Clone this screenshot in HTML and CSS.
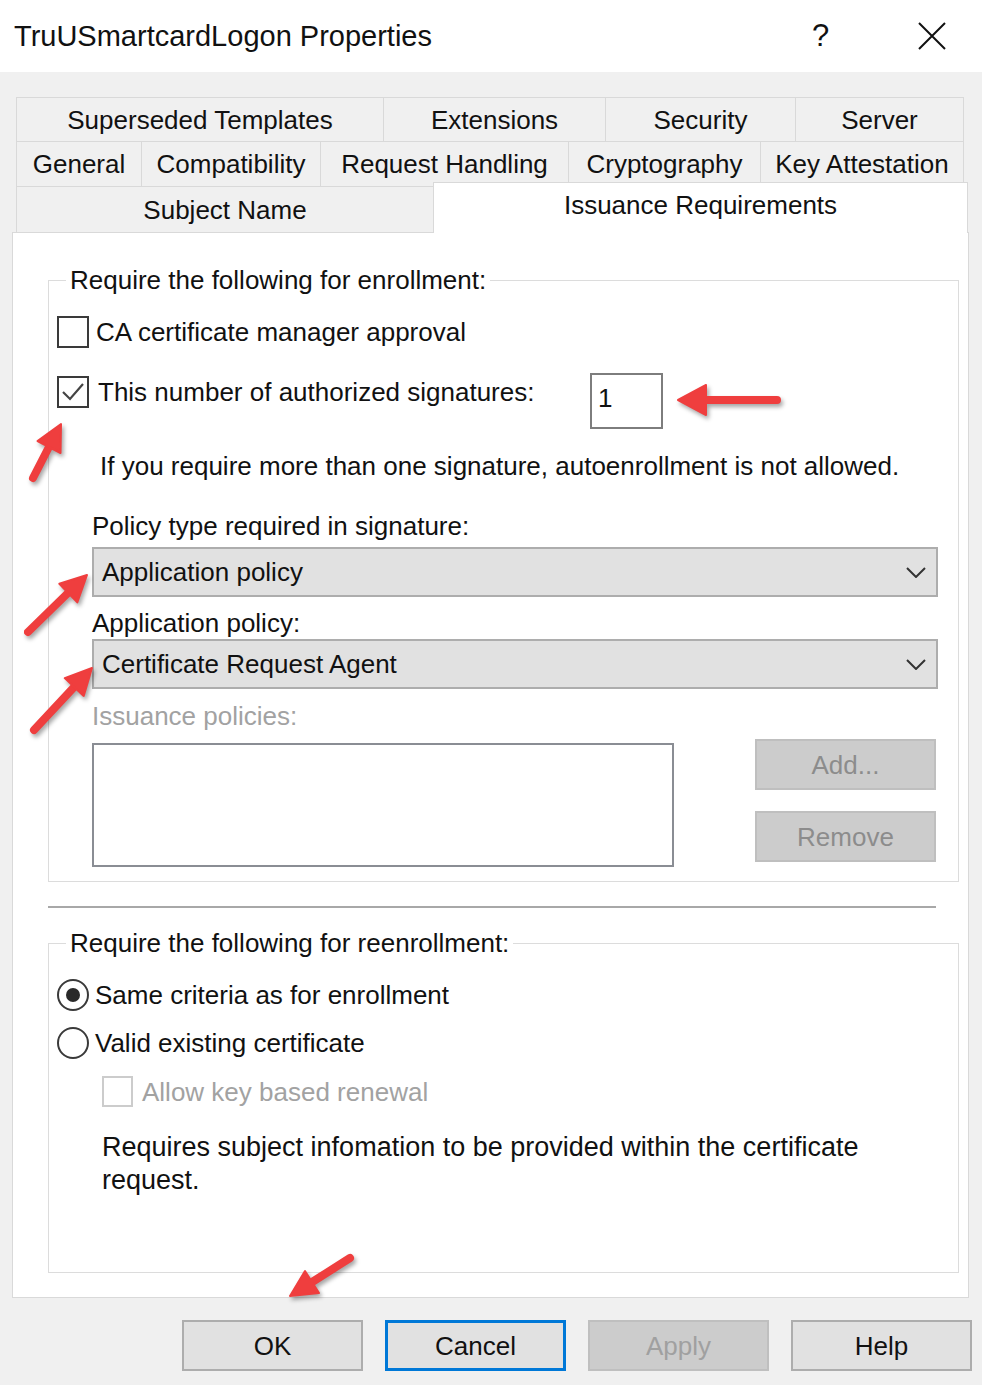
FILE: index.html
```html
<!DOCTYPE html>
<html lang="en">
<head>
<meta charset="utf-8">
<title>TruUSmartcardLogon Properties</title>
<link rel="stylesheet" href="styles.css">
</head>
<body>
<div class="titlebar">
  <div class="title">TruUSmartcardLogon Properties</div>
  <div class="help">?</div>
  <div class="close">
    <svg width="28" height="28" viewBox="0 0 28 28"><path d="M1 1 L27 27 M27 1 L1 27" stroke="#111" stroke-width="2" fill="none"/></svg>
  </div>
</div>

<div class="tabs">
  <div class="tabrow">
    <div class="tab w-sup">Superseded Templates</div>
    <div class="tab w-ext">Extensions</div>
    <div class="tab w-sec">Security</div>
    <div class="tab w-srv">Server</div>
  </div>
  <div class="tabrow r2">
    <div class="tab w-gen">General</div>
    <div class="tab w-cmp">Compatibility</div>
    <div class="tab w-req">Request Handling</div>
    <div class="tab w-cry">Cryptography</div>
    <div class="tab w-key">Key Attestation</div>
  </div>
  <div class="tabrow r3">
    <div class="tab w-sub">Subject Name</div>
    <div class="tab selected">Issuance Requirements</div>
  </div>
</div>

<div class="panel">
  <fieldset class="group g1">
    <legend>Require the following for enrollment:</legend>
    <div class="opt first">
      <span class="chk"></span>
      <span class="txt">CA certificate manager approval</span>
    </div>
    <div class="sigrow">
      <div class="opt sig">
        <span class="chk">
          <svg width="28" height="28" viewBox="0 0 28 28"><path d="M4 14 L11 21 L24 6" stroke="#444" stroke-width="2.2" fill="none"/></svg>
        </span>
        <span class="txt t9">This number of authorized signatures:</span>
      </div>
      <div class="spin">1</div>
    </div>
    <div class="note">If you require more than one signature, autoenrollment is not allowed.</div>
    <div class="lbl l1">Policy type required in signature:</div>
    <div class="combo c1">
      <span>Application policy</span>
      <svg class="chev" width="20" height="11" viewBox="0 0 20 11"><path d="M1 1 L10 10 L19 1" stroke="#333" stroke-width="2" fill="none"/></svg>
    </div>
    <div class="lbl l2">Application policy:</div>
    <div class="combo c2">
      <span>Certificate Request Agent</span>
      <svg class="chev" width="20" height="11" viewBox="0 0 20 11"><path d="M1 1 L10 10 L19 1" stroke="#333" stroke-width="2" fill="none"/></svg>
    </div>
    <div class="lbl l3 disabled">Issuance policies:</div>
    <div class="issrow">
      <div class="list"></div>
      <div class="btncol">
        <div class="btn dis">Add...</div>
        <div class="btn dis">Remove</div>
      </div>
    </div>
  </fieldset>

  <div class="sep"></div>

  <fieldset class="group g2">
    <legend>Require the following for reenrollment:</legend>
    <div class="opt first">
      <span class="radio on"></span>
      <span class="txt t6">Same criteria as for enrollment</span>
    </div>
    <div class="opt r2o">
      <span class="radio"></span>
      <span class="txt t6">Valid existing certificate</span>
    </div>
    <div class="opt sub">
      <span class="chk off"></span>
      <span class="txt t9 disabled">Allow key based renewal</span>
    </div>
    <p class="para">Requires subject infomation to be provided within the certificate<br>request.</p>
  </fieldset>
</div>

<div class="buttons">
  <div class="btn big">OK</div>
  <div class="btn big focus">Cancel</div>
  <div class="btn big dis">Apply</div>
  <div class="btn big">Help</div>
</div>

<svg class="annot" width="982" height="1385" viewBox="0 0 982 1385">
  <g class="arrow">
    <line x1="777" y1="400" x2="702" y2="400"/>
    <polygon points="678,400 706,385 706,415"/>
  </g>
  <g class="arrow">
    <line x1="33" y1="478" x2="51" y2="443"/>
    <polygon points="61,424 60.5,453 37.5,441"/>
  </g>
  <g class="arrow">
    <line x1="28" y1="632" x2="71" y2="590"/>
    <polygon points="87,575 77.3,602.4 59.3,583.8"/>
  </g>
  <g class="arrow">
    <line x1="34" y1="730" x2="76" y2="685"/>
    <polygon points="92,668 83.7,695.9 64.7,678.1"/>
  </g>
  <g class="arrow">
    <line x1="350" y1="1258" x2="309" y2="1284"/>
    <polygon points="290,1296 319,1293 305,1271"/>
  </g>
</svg>
</body>
</html>
```

FILE: styles.css
```css
* { box-sizing: border-box; }

html, body { margin: 0; padding: 0; }

body {
  width: 982px;
  height: 1385px;
  overflow: hidden;
  position: relative;
  background: #f0f0f0;
  font-family: "Liberation Sans", Arial, sans-serif;
  font-size: 26px;
  color: #111;
}

/* title bar */
.titlebar {
  height: 72px;
  background: #fff;
  display: flex;
  align-items: center;
}
.title {
  flex: 1;
  margin-left: 14px;
  font-size: 29px;
  line-height: 30px;
}
.help {
  font-size: 31px;
  line-height: 30px;
  width: 20px;
  margin-right: 86px;
  color: #111;
}
.close {
  width: 28px;
  height: 28px;
  margin-right: 36px;
  display: flex;
}

/* tabs */
.tabs {
  margin: 25px 0 0 16px;
  width: 952px;
}
.tabrow { display: flex; }
.tabrow.r2, .tabrow.r3 { margin-top: -1px; }
.tab {
  height: 45px;
  border: 1px solid #d9d9d9;
  margin-left: -1px;
  background: #f0f0f0;
  display: flex;
  align-items: center;
  justify-content: center;
  white-space: nowrap;
  line-height: 30px;
}
.tab:first-child { margin-left: 0; }
.tabrow.r2 .tab { height: 46px; }
.tabrow.r3 .tab { height: 47px; }

.w-sup { width: 368px; }
.w-ext { width: 223px; }
.w-sec { width: 191px; }
.w-srv { width: 169px; }
.w-gen { width: 126px; }
.w-cmp { width: 180px; }
.w-req { width: 249px; }
.w-cry { width: 193px; }
.w-key { width: 204px; }
.w-sub { width: 418px; }

.tabrow.r3 .tab.selected {
  width: 535px;
  height: 51px;
  margin-top: -4px;
  background: #fff;
  border-bottom: none;
  padding-bottom: 6px;
  position: relative;
  z-index: 1;
}

/* panel */
.panel {
  margin: -1px 0 0 12px;
  width: 957px;
  background: #fff;
  border: 1px solid #d9d9d9;
  padding: 0 0 24px 0;
}

.group {
  margin: 0 0 0 35px;
  width: 911px;
  border: 1px solid #dcdcdc;
  padding: 0;
  min-width: 0;
}
.group legend {
  margin-left: 17px;
  padding: 0 4px;
  line-height: 30px;
  height: 30px;
}
.g1 { margin-top: 32px; padding-bottom: 14px; }
.g2 { margin-top: 20px; padding-bottom: 75px; }

.opt {
  display: flex;
  align-items: center;
  height: 32px;
  margin-left: 8px;
}
.opt.first { margin-top: 21px; }
.txt { margin-left: 7px; line-height: 30px; white-space: nowrap; }
.txt.t9 { margin-left: 9px; }
.txt.t6 { margin-left: 6px; }

.chk {
  width: 32px;
  height: 32px;
  flex: none;
  border: 2px solid #3a3a3a;
  background: #fff;
  display: flex;
  align-items: center;
  justify-content: center;
}
.chk.off {
  width: 31px;
  height: 31px;
  border-color: #cccccc;
}

.sigrow {
  display: flex;
  align-items: flex-start;
  margin-top: 25px;
  height: 56px;
}
.opt.sig {
  width: 533px;
  flex: none;
  margin-top: 3px;
}
.spin {
  width: 73px;
  height: 56px;
  border: 2px solid #7d7d7d;
  background: #fff;
  padding: 0 0 6px 6px;
  display: flex;
  align-items: center;
}

.note {
  margin: 22px 0 0 51px;
  line-height: 30px;
  white-space: nowrap;
}
.lbl {
  margin-left: 43px;
  line-height: 30px;
  white-space: nowrap;
}
.lbl.l1 { margin-top: 30px; }
.lbl.l2 { margin-top: 11px; }
.lbl.l3 { margin-top: 12px; }
.disabled { color: #a2a2a2; }

.combo {
  margin-left: 43px;
  width: 846px;
  height: 50px;
  background: #e1e1e1;
  border: 2px solid #adadad;
  display: flex;
  align-items: center;
  justify-content: space-between;
  padding: 0 10px 0 8px;
  line-height: 30px;
}
.combo.c1 { margin-top: 6px; }
.combo.c2 { margin-top: 1px; }
.chev { flex: none; }

.issrow {
  display: flex;
  align-items: flex-start;
  margin: 8px 0 0 43px;
}
.list {
  width: 582px;
  height: 124px;
  margin-top: 4px;
  border: 2px solid #8a8d94;
  background: #fff;
}
.btncol {
  margin-left: 81px;
  display: flex;
  flex-direction: column;
  gap: 21px;
}

.btn {
  width: 181px;
  height: 51px;
  display: flex;
  align-items: center;
  justify-content: center;
  background: #e1e1e1;
  border: 2px solid #adadad;
  line-height: 30px;
}
.btn.dis {
  background: #cccccc;
  border-color: #bfbfbf;
  color: #8c8c8c;
}
.btn.big.dis { color: #a0a0a0; }
.btn.focus {
  border: 3px solid #0078d7;
}

.sep {
  margin: 24px 0 0 35px;
  width: 888px;
  height: 2px;
  background: #a8a8a8;
}

.radio {
  width: 32px;
  height: 32px;
  flex: none;
  border: 2px solid #3a3a3a;
  border-radius: 50%;
  background: #fff;
  display: flex;
  align-items: center;
  justify-content: center;
}
.radio.on::after {
  content: "";
  width: 14px;
  height: 14px;
  border-radius: 50%;
  background: #2a2a2a;
}
.opt.r2o { margin-top: 16px; }
.opt.sub { margin: 17px 0 0 53px; height: 31px; }

.para {
  margin: 24px 0 0 53px;
  font-size: 27px;
  line-height: 33px;
}

/* bottom buttons */
.buttons {
  display: flex;
  gap: 22px;
  margin: 22px 0 0 182px;
}

/* annotation arrows */
.annot {
  position: absolute;
  left: 0;
  top: 0;
  pointer-events: none;
  filter: drop-shadow(2px 3px 2px rgba(0, 0, 0, 0.35));
}
.arrow line {
  stroke: #ef3e3e;
  stroke-width: 8;
  stroke-linecap: round;
}
.arrow polygon {
  fill: #ef3e3e;
  stroke: #ef3e3e;
  stroke-width: 2;
  stroke-linejoin: round;
}
```
